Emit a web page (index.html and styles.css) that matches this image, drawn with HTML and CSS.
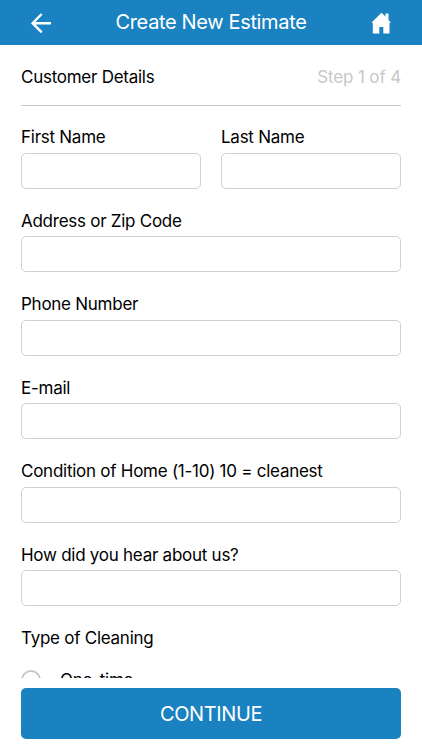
FILE: index.html
```html
<!DOCTYPE html>
<html>

<head>
<meta charset="utf-8">
<meta name="viewport" content="width=device-width, initial-scale=1">

<title>Create New Estimate</title>

<link rel="stylesheet" href="styles.css">
</head>

<body>

	<header class="topbar">
		<a href="#" aria-label="Back">
			<svg width="22" height="22" viewBox="0 0 22 22">
				<path d="M21 11.200H3M11.700 2L2.600 11.200l9.100 9.100" fill="none" stroke="#fff" stroke-width="2.400"/>
			</svg>
		</a>
		<h1 class="title">Create New Estimate</h1>
		<a href="#" aria-label="Home">
			<svg width="22" height="22" viewBox="0 0 22 22">
				<path d="M11.500 .8L1.300 10.800h1.500V21.500h6.500v-6.500h4v6.500h6.200V10.800h1.500l-2.500-2.700V1.500h-3v3z" fill="#fff"/>
			</svg>
		</a>
	</header>

	<form class="details">
		<div class="heading">
			<h2>Customer Details</h2>
			<span class="step">Step 1 of 4</span>
		</div>

		<div class="row">
			<div class="field">
				<label for="first">First Name</label>
				<input id="first" type="text">
			</div>
			<div class="field">
				<label for="last">Last Name</label>
				<input id="last" type="text">
			</div>
		</div>
		<div class="field">
			<label for="address">Address or Zip Code</label>
			<input id="address" type="text">
		</div>
		<div class="field">
			<label for="phone">Phone Number</label>
			<input id="phone" type="tel">
		</div>
		<div class="field">
			<label for="email">E-mail</label>
			<input id="email" type="email">
		</div>
		<div class="field">
			<label for="condition">Condition of Home (1-10) 10 = cleanest</label>
			<input id="condition" type="text">
		</div>
		<div class="field">
			<label for="hear">How did you hear about us?</label>
			<input id="hear" type="text">
		</div>
		<div class="field">
			<label>Type of Cleaning</label>
			<label class="option"><input type="radio" name="cleaning">One-time</label>
		</div>
	</form>

	<footer class="bottom">
		<button type="button">CONTINUE</button>
	</footer>

</body>
</html>
```
FILE: styles.css
```css
	* {
		box-sizing: border-box;
	}

	body {
		display: flex;
		flex-direction: column;
		height: 750px;
		margin: 0;
		overflow: hidden;
		background: #fff;
		color: #000;
		font-family: Inter, "Liberation Sans", sans-serif;
		font-size: 17px;
		letter-spacing: -0.26px;
	}

	h1, h2 {
		margin: 0;
		font-weight: 400;
	}

	.topbar {
		display: flex;
		flex: none;
		align-items: center;
		justify-content: space-between;
		height: 45px;
		padding: 0 30px;
		background: #1a82c0;
		color: #fff;
	}

	.topbar svg {
		display: block;
	}

	.title {
		padding-bottom: 2px;
		font-size: 20px;
		letter-spacing: -0.35px;
	}

	.details {
		flex: 1;
		min-height: 0;
		padding: 0 21px;
		overflow: hidden;
	}

	.heading {
		display: flex;
		align-items: center;
		justify-content: space-between;
		height: 61px;
		margin-bottom: 19.7px;
		padding-top: 3px;
		border-bottom: 1px solid #c8c8c8;
	}

	.heading h2 {
		font-size: 17px;
	}

	.step {
		color: #c8c8c8;
		letter-spacing: -0.15px;
	}

	.row {
		display: flex;
		gap: 20px;
	}

	.field {
		flex: 1;
		min-width: 0;
		height: 83.5px;
	}

	.field label {
		display: flex;
		align-items: center;
		height: 22px;
		margin-bottom: 5px;
		padding-top: 1.4px;
		white-space: nowrap;
	}

	.field input[type="text"],
	.field input[type="tel"],
	.field input[type="email"] {
		display: block;
		width: 100%;
		height: 36px;
		border: 1px solid #d0d0d0;
		border-radius: 5px;
		background: #fff;
	}

	.field .option {
		height: 22px;
		margin-top: 19px;
		padding-top: 2px;
	}

	.option input {
		appearance: none;
		width: 20px;
		height: 20px;
		margin: 0 19px 0 0;
		border: 2px solid #c8c8c8;
		border-radius: 50%;
	}

	.bottom {
		flex: none;
		height: 72px;
		padding: 10.4px 21px;
	}

	.bottom button {
		width: 100%;
		height: 51px;
		border: 0;
		border-radius: 5px;
		background: #1a82c0;
		color: #fff;
		font-family: inherit;
		font-size: 20px;
		letter-spacing: -0.4px;
	}
```
